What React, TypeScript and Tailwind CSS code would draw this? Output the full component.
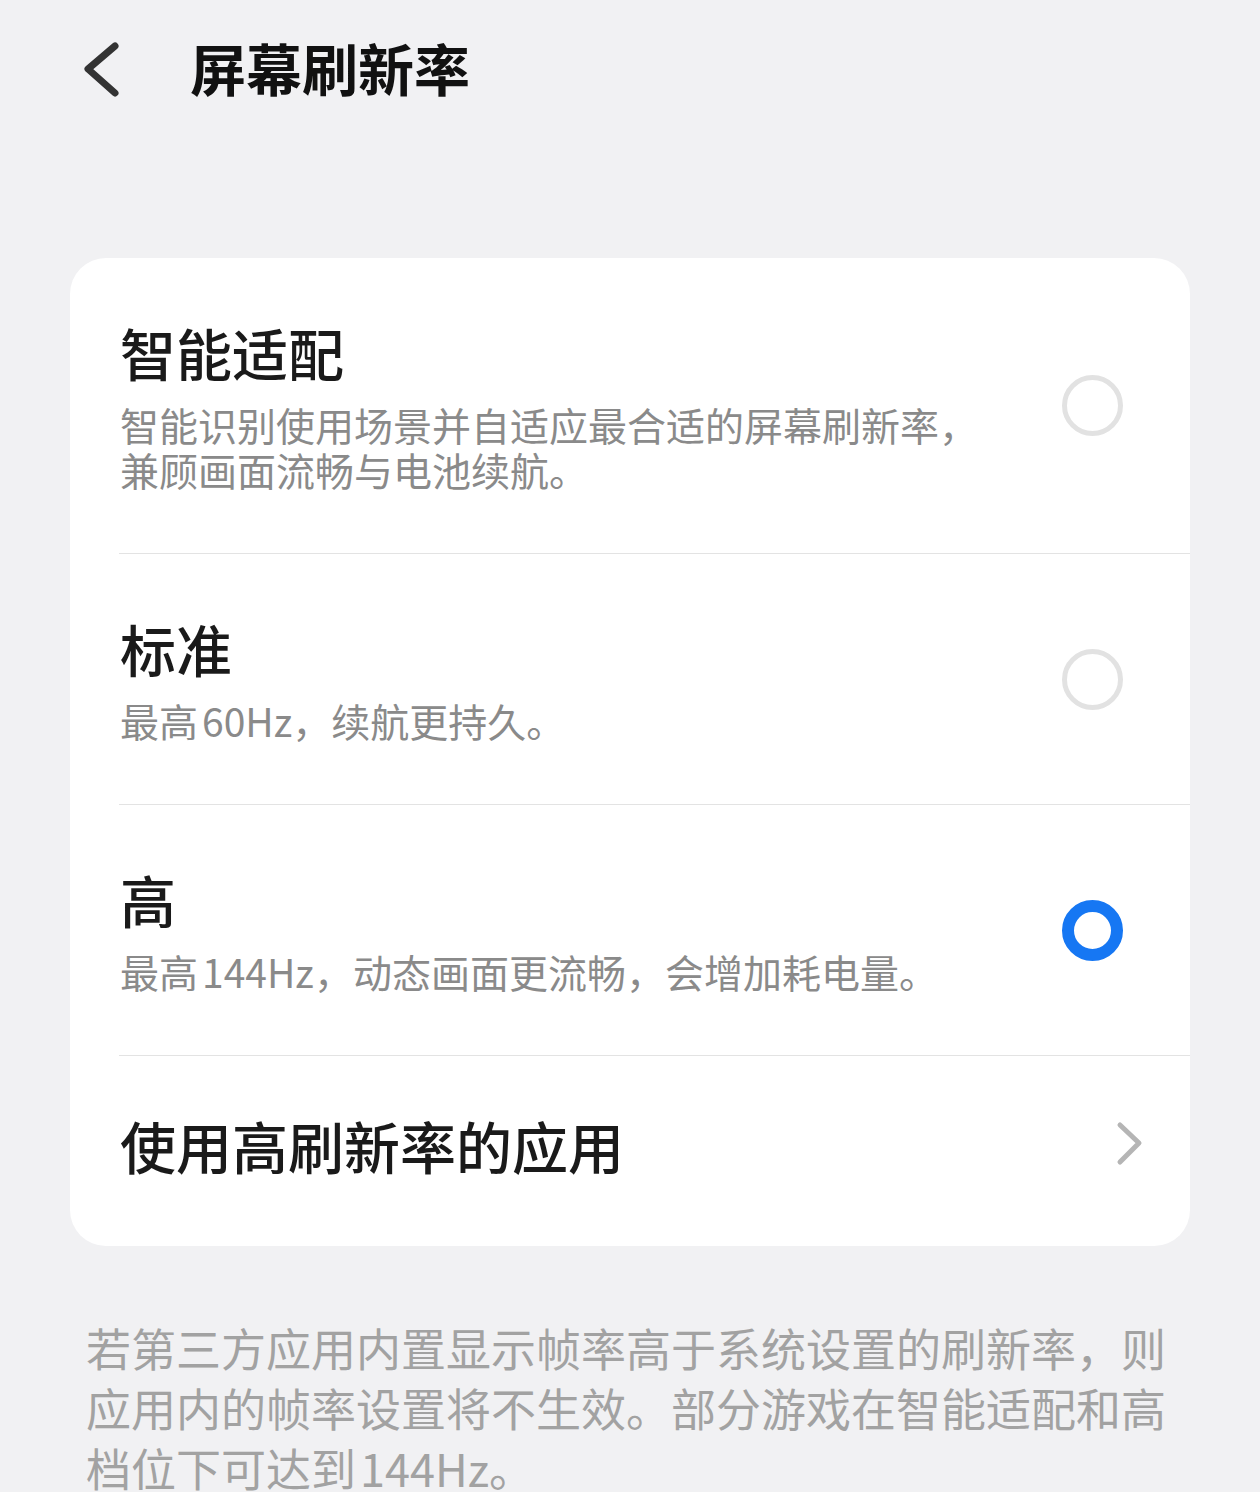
const font = { fontFamily: '"Noto Sans CJK SC", "Noto Sans", sans-serif' };

function Radio({ checked }: { checked?: boolean }) {
  if (checked) {
    return <div className="w-[61px] h-[61px] rounded-full border-[12px] border-[#1677f3] bg-white shrink-0" />;
  }
  return <div className="w-[61px] h-[61px] rounded-full border-[5px] border-[#e2e2e2] bg-white shrink-0" />;
}

function Option({ title, desc, checked }: { title: string; desc: React.ReactNode; checked?: boolean }) {
  return (
    <div className="flex items-center pl-[50px] pr-[67px]">
      <div className="flex-1 flex flex-col gap-[20px] pt-[64px] pb-[61px]">
        <div className="text-[56px] leading-[60px] font-medium text-[#1a1a1a]">{title}</div>
        <div className="text-[39px] leading-[45px] text-[#8a8a8a]">{desc}</div>
      </div>
      <Radio checked={checked} />
    </div>
  );
}

function Divider() {
  return <div className="ml-[49px] h-px bg-[#e3e3e3]" />;
}

export default function App() {
  return (
    <div className="h-[1492px] overflow-hidden bg-[#f1f1f3]" style={font}>
      <div className="h-[140px] flex items-center">
        <svg className="ml-[80px]" width="44" height="60" viewBox="0 0 44 60">
          <path d="M35 6 L8 29 L35 53" fill="none" stroke="#333" strokeWidth="7" strokeLinecap="round" strokeLinejoin="round" />
        </svg>
        <div className="ml-[66px] mb-[6px] text-[56px] leading-[60px] font-bold text-[#111]">屏幕刷新率</div>
      </div>

      <div className="mt-[118px] mx-[70px] bg-white rounded-[36px] overflow-hidden">
        <Option
          title="智能适配"
          desc={<>智能识别使用场景并自适应最合适的屏幕刷新率，<br />兼顾画面流畅与电池续航。</>}
        />
        <Divider />
        <Option title="标准" desc={<>最高<span className="ml-[4px]">60Hz</span>，续航更持久。</>} />
        <Divider />
        <Option title="高" desc={<>最高<span className="ml-[4px]">144Hz</span>，动态画面更流畅，会增加耗电量。</>} checked />
        <Divider />
        <div className="h-[190px] flex items-center pl-[50px] pr-[46px]">
          <div className="flex-1 mb-[12px] text-[56px] leading-[60px] font-medium text-[#1a1a1a]">使用高刷新率的应用</div>
          <svg className="mb-[14px]" width="30" height="46" viewBox="0 0 30 46">
            <path d="M6 4 L25 22 L6 41" fill="none" stroke="#b5b5b5" strokeWidth="5" strokeLinecap="round" strokeLinejoin="round" />
          </svg>
        </div>
      </div>

      <div className="mt-[72px] pl-[86px] pr-[60px] text-[45px] leading-[60px] text-[#a2a2a2]">
        若第三方应用内置显示帧率高于系统设置的刷新率，则<br />
        应用内的帧率设置将不生效。部分游戏在智能适配和高<br />
        档位下可达到<span className="ml-[4px]">144Hz</span>。
      </div>
    </div>
  );
}
